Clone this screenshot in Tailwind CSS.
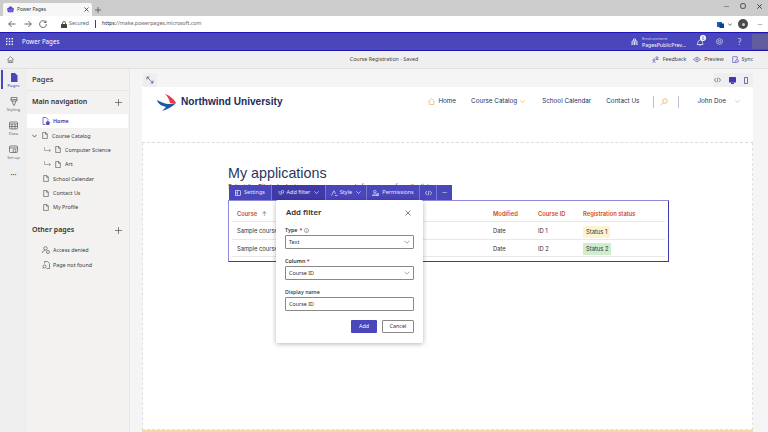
<!DOCTYPE html>
<html lang="en">
  <head>
    <meta charset="UTF-8" />
    <title>Power Pages</title>
    <script src="https://cdn.jsdelivr.net/npm/@tailwindcss/browser@4"></script>
  </head>
  <body class="w-[768px] h-[432px] overflow-hidden flex flex-col bg-white font-['Noto_Sans',sans-serif] text-[5.400px] text-[#323130]">
    <!-- browser tab strip -->
    <div class="h-[16px] bg-[#cccccc] flex items-end pl-[3px] shrink-0">
      <div class="w-[89px] h-[13px] bg-[#f7f7f7] rounded-t-[2px] flex items-center pl-[4px] pr-[3px] gap-[3px]">
        <svg width="7" height="7" viewBox="0 0 8 8"><path d="M4 0l4 3-1 4H1L0 3z" fill="#5b4fc4"/><path d="M0 3l4 1 4-1-4 4z" fill="#8a5fd8"/></svg>
        <span class="text-[4.800px] text-[#333] flex-1">Power Pages</span>
        <svg width="5" height="5" viewBox="0 0 5 5" stroke="#333" stroke-width=".8"><path d="M.5.5l4 4M4.500.5l-4 4"/></svg>
      </div>
      <svg class="ml-[3px] mb-[3px]" width="6" height="6" viewBox="0 0 6 6" stroke="#444" stroke-width=".7"><path d="M3 0v6M0 3h6"/></svg>
      <div class="ml-auto flex items-center gap-[11px] pr-[6px] h-[12px] mb-[4px]">
        <svg width="5" height="5" viewBox="0 0 5 5" stroke="#777" stroke-width=".8"><path d="M0 2.500h5"/></svg>
        <svg width="6" height="6" viewBox="0 0 6 6" fill="none" stroke="#444" stroke-width=".9"><rect x=".7" y=".7" width="4.600" height="4.600" rx="1"/></svg>
        <svg width="5" height="5" viewBox="0 0 5 5" stroke="#333" stroke-width=".9"><path d="M.3.3l4.400 4.400M4.700.3L.3 4.700"/></svg>
      </div>
    </div>
    <!-- address bar -->
    <div class="h-[16px] bg-white flex items-center shrink-0 pl-[8px] pr-[6px]">
      <svg width="8" height="8" viewBox="0 0 8 8" fill="none" stroke="#444" stroke-width=".8"><path d="M7.500 4H.7M3.700 1L.7 4l3 3"/></svg>
      <svg class="ml-[8px]" width="8" height="8" viewBox="0 0 8 8" fill="none" stroke="#444" stroke-width=".8"><path d="M.5 4h6.800M4.300 1l3 3-3 3"/></svg>
      <svg class="ml-[7px]" width="8" height="8" viewBox="0 0 8 8" fill="none" stroke="#444" stroke-width=".8"><path d="M6.800 2.200A3.400 3.400 0 1 0 7.400 4M7 .6v1.900H5.100"/></svg>
      <svg class="ml-[14px]" width="6" height="7" viewBox="0 0 6 7"><rect y="3" width="6" height="4" rx=".5" fill="#444"/><path d="M1.500 3V2a1.500 1.500 0 0 1 3 0v1" fill="none" stroke="#444" stroke-width=".8"/></svg>
      <span class="ml-[2px] text-[5.300px] text-[#666]">Secured</span>
      <span class="ml-[6px] w-px h-[8px] bg-[#444]"></span>
      <span class="ml-[6px] text-[5.200px] text-[#666]"><span class="text-[#222]">https</span>://make.powerpages.microsoft.com</span>
      <div class="ml-auto flex items-center">
        <svg width="7" height="7" viewBox="0 0 7 7"><rect width="5" height="5" y="1" fill="#1a5fb4"/><rect x="2.500" width="4.500" height="4.500" y="2.500" fill="#0b3f8f"/></svg>
        <svg class="ml-[4px]" width="4" height="3" viewBox="0 0 4 3" fill="none" stroke="#333" stroke-width=".7"><path d="M.3.5L2 2.400 3.700.5"/></svg>
        <span class="ml-[6px] w-[10px] h-[10px] rounded-full bg-[#4a4a4a] flex items-center justify-center"><span class="w-[3px] h-[3px] rounded-full bg-[#ccc]"></span></span>
        <span class="ml-[9px] text-[7px] leading-none text-[#777] tracking-tighter">···</span>
      </div>
    </div>
    <!-- power pages bar -->
    <div class="h-[19px] bg-[#4a46bb] border-y border-[#1f14b4] flex items-center shrink-0 text-white">
      <svg class="ml-[6px]" width="7" height="7" viewBox="0 0 7 7" fill="#fff"><rect width="1.400" height="1.400"/><rect x="2.800" width="1.400" height="1.400"/><rect x="5.600" width="1.400" height="1.400"/><rect y="2.800" width="1.400" height="1.400"/><rect x="2.800" y="2.800" width="1.400" height="1.400"/><rect x="5.600" y="2.800" width="1.400" height="1.400"/><rect y="5.600" width="1.400" height="1.400"/><rect x="2.800" y="5.600" width="1.400" height="1.400"/><rect x="5.600" y="5.600" width="1.400" height="1.400"/></svg>
      <span class="ml-[9px] text-[6.200px]">Power Pages</span>
      <svg class="ml-auto" width="7" height="7" viewBox="0 0 7 7" fill="none" stroke="#fff" stroke-width=".7"><path d="M1 7V3h5v4M.3 7h6.400M2.500 3V1h2v2M1 5h5M3.500 3v4"/></svg>
      <div class="ml-[4px] w-[44px] leading-[6px]">
        <div class="text-[4.200px] text-[#d4d2f0]">Environment</div>
        <div class="text-[5.200px]">PagesPublicPrev...</div>
      </div>
      <div class="ml-[10px] relative w-[8px] h-[8px]">
        <svg width="8" height="8" viewBox="0 0 8 8" fill="none" stroke="#fff" stroke-width=".7"><path d="M1 6.500c1-1 .5-4 3-4.500s2.500 3 3 4.500zM3 7h2"/></svg>
        <span class="absolute -top-[3px] -right-[2px] w-[6px] h-[6px] rounded-full bg-white text-[#4a46bb] text-[4.500px] leading-[6px] text-center">6</span>
      </div>
      <svg class="ml-[12px]" width="7" height="7" viewBox="0 0 7 7" fill="none" stroke="#d9d8f3" stroke-width=".7"><circle cx="3.500" cy="3.500" r="1.200"/><path d="M3.500.4l2.700 1.500v3.200L3.500 6.600.8 5.100V1.900z"/></svg>
      <span class="ml-[13px] w-[7px] text-center text-[8px] leading-none text-[#d9d8f3]">?</span>
      <span class="ml-[9px] w-[16px] h-[15px] bg-[#625d9f]"></span>
    </div>
    <!-- command bar -->
    <div class="h-[18px] bg-[#efefef] border-b border-[#e0e0e0] grid grid-cols-[1fr_auto_1fr] items-center shrink-0">
      <svg class="ml-[7px]" width="7" height="7" viewBox="0 0 7 7" fill="none" stroke="#555" stroke-width=".6"><path d="M.5 3.500L3.500.6l3 2.900M1.200 3v3.500h4.600V3M2.700 6.500V4.500h1.600v2"/></svg>
      <span class="text-[5.300px] text-[#444]">Course Registration - Saved</span>
      <div class="flex items-center justify-end pr-[15px] text-[5.300px] text-[#444]">
        <svg width="7" height="7" viewBox="0 0 7 7" fill="none" stroke="#5a55c0" stroke-width=".7"><circle cx="5" cy="1.800" r="1.100"/><circle cx="2" cy="4" r="1.100"/><path d="M.5 6.500c.5-1 2.500-1 3 0M4 3.500h2.500"/></svg>
        <span class="ml-[4px]">Feedback</span>
        <svg class="ml-[7px]" width="8" height="7" viewBox="0 0 8 7" fill="none" stroke="#5a55c0" stroke-width=".7"><path d="M.5 3.500L4 1l3.500 2.500L4 6z"/><circle cx="4" cy="3.500" r=".8"/></svg>
        <span class="ml-[3px]">Preview</span>
        <svg class="ml-[8px]" width="7" height="7" viewBox="0 0 7 7" fill="none" stroke="#5a55c0" stroke-width=".7"><path d="M4 6.500H.7V.7h4.500v2.500"/><circle cx="5" cy="5" r="1.400"/></svg>
        <span class="ml-[3px]">Sync</span>
      </div>
    </div>

    <div class="flex-1 flex min-h-0">
      <!-- left rail -->
      <div class="w-[27px] bg-[#efefef] shrink-0 pt-[1px] flex flex-col items-center text-[4.200px] text-[#666]">
        <div class="relative w-full h-[24px] flex flex-col items-center pt-[3px] text-[#3f3ab0]">
          <span class="absolute left-[1px] top-0 w-[1.500px] h-[19px] bg-[#4a46bb]"></span>
          <svg width="8" height="9" viewBox="0 0 8 9" fill="#4a46bb"><path d="M1 0h4l2.500 2.500V9H1z"/></svg>
          <span class="mt-[1px]">Pages</span>
        </div>
        <div class="w-full h-[24px] flex flex-col items-center pt-[3px]">
          <svg width="8" height="9" viewBox="0 0 8 9" fill="none" stroke="#555" stroke-width=".7"><path d="M1 .5h6v3.500H1zM1 2.500h6M2.500 4L3 7l1 1.500L5 7l.5-3"/></svg>
          <span class="mt-[1px]">Styling</span>
        </div>
        <div class="w-full h-[24px] flex flex-col items-center pt-[3px]">
          <svg width="9" height="9" viewBox="0 0 9 9" fill="none" stroke="#555" stroke-width=".7"><rect x=".5" y="1" width="8" height="7" rx="1"/><path d="M.5 3h8M3 3v5M6 3v5M.5 5.500h8"/></svg>
          <span class="mt-[1px]">Data</span>
        </div>
        <div class="w-full h-[24px] flex flex-col items-center pt-[3px]">
          <svg width="9" height="9" viewBox="0 0 9 9" fill="none" stroke="#555" stroke-width=".7"><rect x=".5" y="1" width="8" height="6.500" rx="1"/><path d="M.5 3h8"/><circle cx="5.500" cy="5.800" r="1.500" fill="#efefef"/></svg>
          <span class="mt-[1px]">Set up</span>
        </div>
        <div class="mt-[5px] text-[7px] leading-none font-bold text-[#444]">···</div>
      </div>

      <!-- pages panel -->
      <div class="w-[103px] bg-[#f3f2f1] shrink-0 border-r border-[#e8e8e8] text-[#3b3a39]">
        <div class="h-[22px] border-b border-[#e6e6e6] pl-[5px] flex items-center text-[7.500px] font-medium text-[#333]">Pages</div>
        <div class="h-[23px] flex items-center justify-between pl-[5px] pr-[7px] text-[7px] font-semibold text-[#323130]">
          <span>Main navigation</span>
          <svg width="7" height="7" viewBox="0 0 7 7" stroke="#555" stroke-width=".7"><path d="M3.500 0v7M0 3.500h7"/></svg>
        </div>
        <div class="h-[14.400px] bg-white flex items-center pl-[15px] font-semibold text-[#3a34b0] mr-px">
          <svg width="8" height="8" viewBox="0 0 8 8" fill="none" stroke="#3f3ab8" stroke-width=".7"><path d="M3.500 7.500h-2.500V.5h3l2 2v1"/><path d="M3.800 5.800l2-1.800 2 1.800M4.500 5.500v2h2.600v-2" fill="#3f3ab8"/></svg>
          <span class="ml-[3px]">Home</span>
        </div>
        <div class="h-[14.400px] flex items-center pl-[5px]">
          <svg width="5" height="4" viewBox="0 0 5 4" fill="none" stroke="#333" stroke-width=".7"><path d="M.3.7l2.200 2.400L4.700.7"/></svg>
          <svg class="ml-[5px]" width="6" height="7" viewBox="0 0 6 7" fill="none" stroke="#444" stroke-width=".6"><path d="M.7.4h3l1.600 1.600v4.600H.7zM3.500.4V2.200h1.800"/></svg>
          <span class="ml-[4px]">Course Catalog</span>
        </div>
        <div class="h-[14.400px] flex items-center pl-[17px]">
          <svg width="7" height="6" viewBox="0 0 7 6" fill="none" stroke="#666" stroke-width=".5"><path d="M.5 0v3.500h6M5 2l1.500 1.500L5 5"/></svg>
          <svg class="ml-[4px]" width="6" height="7" viewBox="0 0 6 7" fill="none" stroke="#444" stroke-width=".6"><path d="M.7.4h3l1.600 1.600v4.600H.7zM3.500.4V2.200h1.800"/></svg>
          <span class="ml-[4px]">Computer Science</span>
        </div>
        <div class="h-[14.400px] flex items-center pl-[17px]">
          <svg width="7" height="6" viewBox="0 0 7 6" fill="none" stroke="#666" stroke-width=".5"><path d="M.5 0v3.500h6M5 2l1.500 1.500L5 5"/></svg>
          <svg class="ml-[4px]" width="6" height="7" viewBox="0 0 6 7" fill="none" stroke="#444" stroke-width=".6"><path d="M.7.4h3l1.600 1.600v4.600H.7zM3.500.4V2.200h1.800"/></svg>
          <span class="ml-[4px]">Art</span>
        </div>
        <div class="h-[14.400px] flex items-center pl-[16px]">
          <svg width="6" height="7" viewBox="0 0 6 7" fill="none" stroke="#444" stroke-width=".6"><path d="M.7.4h3l1.600 1.600v4.600H.7zM3.500.4V2.200h1.800"/></svg>
          <span class="ml-[4px]">School Calendar</span>
        </div>
        <div class="h-[14.400px] flex items-center pl-[16px]">
          <svg width="6" height="7" viewBox="0 0 6 7" fill="none" stroke="#444" stroke-width=".6"><path d="M.7.4h3l1.600 1.600v4.600H.7zM3.500.4V2.200h1.800"/></svg>
          <span class="ml-[4px]">Contact Us</span>
        </div>
        <div class="h-[14.400px] flex items-center pl-[16px]">
          <svg width="6" height="7" viewBox="0 0 6 7" fill="none" stroke="#444" stroke-width=".6"><path d="M.7.4h3l1.600 1.600v4.600H.7zM3.500.4V2.200h1.800"/></svg>
          <span class="ml-[4px]">My Profile</span>
        </div>
        <div class="h-[25px] mt-[3.500px] flex items-center justify-between pl-[5px] pr-[7px] text-[7px] font-semibold text-[#323130]">
          <span>Other pages</span>
          <svg width="7" height="7" viewBox="0 0 7 7" stroke="#555" stroke-width=".7"><path d="M3.500 0v7M0 3.500h7"/></svg>
        </div>
        <div class="h-[14.400px] flex items-center pl-[15px]">
          <svg width="8" height="8" viewBox="0 0 8 8" fill="none" stroke="#444" stroke-width=".6"><circle cx="3.500" cy="2.300" r="1.700"/><path d="M.5 7c0-2 1.500-2.800 3-2.800"/><circle cx="6" cy="6" r="1.500"/></svg>
          <span class="ml-[3px]">Access denied</span>
        </div>
        <div class="h-[14.400px] flex items-center pl-[15px]">
          <svg width="8" height="8" viewBox="0 0 8 8" fill="none" stroke="#444" stroke-width=".6"><path d="M2.500 2.500V.5h3l2 2v5h-3"/><circle cx="2.500" cy="5.500" r="1.500"/><path d="M1.500 6.500l-1 1"/></svg>
          <span class="ml-[3px]">Page not found</span>
        </div>
      </div>

      <!-- canvas -->
      <div class="flex-1 min-w-0 bg-[#f5f5f5] bg-[radial-gradient(#d2d2d2_0.5px,transparent_0.6px)] bg-[size:8px_8px] pl-[12px] pr-[15px] pt-[4px] flex flex-col">
        <div class="h-[14px] flex justify-between shrink-0">
          <div class="ml-px w-[14px] bg-[#eeeeee] flex items-center justify-center">
            <svg width="8" height="8" viewBox="0 0 8 8" fill="none" stroke="#4a4a7a" stroke-width=".7"><path d="M1 3.500V1h2.500M1 1l6 6M7 4.500V7H4.500"/></svg>
          </div>
          <div class="w-[40px] bg-[#eeeeee] flex items-center justify-end gap-[8px] pr-[5px]">
            <svg width="7" height="6" viewBox="0 0 7 6" fill="none" stroke="#4a4a7a" stroke-width=".6"><path d="M2 1L.4 3 2 5M5 1l1.600 2L5 5M4 .6L3 5.400"/></svg>
            <svg width="7" height="7" viewBox="0 0 7 7" fill="#3f3ab0"><rect width="7" height="5.500" rx=".5"/><rect x="2" y="5.500" width="3" height="1.500"/></svg>
            <svg width="4" height="7" viewBox="0 0 4 7" fill="none" stroke="#3f3ab0" stroke-width=".8"><rect x=".4" y=".4" width="3.200" height="6.200" rx=".4"/></svg>
          </div>
        </div>
        <div class="flex-1 bg-white flex flex-col min-h-0">
          <!-- site header -->
          <div class="h-[56px] shrink-0 border-b border-dashed border-[#dcdcdc] flex items-start pt-[7px] pl-[15px] pr-[13px] text-[6.300px] text-[#20315f] font-['Inter',sans-serif]">
            <svg width="19" height="17" viewBox="0 0 19 17">
              <path d="M0 6C4 8 8 10 12 10L19 9C15 13 11 15 5 17L9 13C5 12 1 10 0 6Z" fill="#1d5a9e"/>
              <path d="M8 0C12 1 17 5 19 9L13 9C12 5 11 3 8 0Z" fill="#e8394a"/>
            </svg>
            <span class="ml-[5px] h-[15px] flex items-center font-['Liberation_Sans',sans-serif] font-bold text-[10.100px] text-[#1c2c5e]">Northwind University</span>
            <div class="ml-auto h-[15px] flex items-center">
              <svg width="7" height="7" viewBox="0 0 7 7" fill="none" stroke="#f2b04a" stroke-width=".7"><path d="M.4 3.500L3.500.6l3.100 2.900M1.200 3v3.500h4.600V3"/></svg>
              <span class="ml-[3px]">Home</span>
              <span class="ml-[15px]">Course Catalog</span>
              <svg class="ml-[3px]" width="5" height="3" viewBox="0 0 5 3" fill="none" stroke="#f2b04a" stroke-width=".7"><path d="M.3.4L2.500 2.500 4.700.4"/></svg>
              <span class="ml-[17px]">School Calendar</span>
              <span class="ml-[15px]">Contact Us</span>
              <span class="ml-[14px] w-px h-[12px] bg-[#b9c2d2]"></span>
              <svg class="ml-[6px]" width="8" height="8" viewBox="0 0 8 8" fill="none" stroke="#f2b04a" stroke-width=".8"><circle cx="5" cy="3" r="2.300"/><path d="M3.300 4.700L.6 7.400"/></svg>
              <span class="ml-[10px] w-px h-[12px] bg-[#b9c2d2]"></span>
              <span class="ml-[18px]">John Doe</span>
              <svg class="ml-[9px]" width="5" height="3" viewBox="0 0 5 3" fill="none" stroke="#f2b04a" stroke-width=".7"><path d="M.3.4L2.500 2.500 4.700.4"/></svg>
            </div>
          </div>
          <!-- page section -->
          <div class="flex-1 relative border-x border-b border-dashed border-[#e0e0e0] pl-[85px] pt-[21px] min-h-0">
            <h1 class="font-['Liberation_Sans',sans-serif] text-[14.300px] leading-[18px] text-[#1f3864]">My applications</h1>
            <p class="mt-[1px] h-[8px] text-[6px] leading-[8px] text-[#333] font-['Inter',sans-serif]">Select the Tile to look at your courses or apply for courses from the list</p>
            <!-- list -->
            <div class="mt-[9px] w-[441px] h-[62px] border border-[#8f8bdb] border-b-[#3d38ae] border-r-[#3d38ae] rounded-[1px] px-[3px] pt-[4px] font-['Inter',sans-serif] text-[5.800px] text-[#333]">
              <div class="h-[17px] border-b border-[#e8e8e8] pl-[5px] pt-[2px] flex items-center font-semibold text-[#cf4a1c]">
                <span class="w-[256px]">Course <span class="ml-[3px] text-[#888]">↑</span></span>
                <span class="w-[45px]">Modified</span>
                <span class="w-[45px]">Course ID</span>
                <span>Registration status</span>
              </div>
              <div class="h-[18px] border-b border-[#e8e8e8] pl-[5px] pt-[2px] flex items-center">
                <span class="w-[256px]">Sample course</span>
                <span class="w-[45px]">Date</span>
                <span class="w-[45px]">ID 1</span>
                <span class="px-[3px] h-[12px] leading-[12px] bg-[#fdf3d0]">Status 1</span>
              </div>
              <div class="h-[17px] border-b border-[#e8e8e8] pl-[5px] pt-[2px] flex items-center">
                <span class="w-[256px]">Sample course</span>
                <span class="w-[45px]">Date</span>
                <span class="w-[45px]">ID 2</span>
                <span class="px-[3px] h-[12px] leading-[12px] bg-[#cfeccd]">Status 2</span>
              </div>
            </div>
            <!-- component toolbar -->
            <div class="absolute left-[86px] top-[42px] h-[15px] flex gap-px bg-[#7a76cf] text-[5.500px] text-[#e6e5f8] rounded-[1px]">
              <div class="w-[42px] bg-[#4a46bb] flex items-center justify-center gap-[3px]">
                <svg width="6" height="6" viewBox="0 0 6 6" fill="none" stroke="#fff" stroke-width=".6"><rect x=".4" y=".7" width="5.200" height="4.600"/><path d="M2.400.7v4.600M.4 3h2"/></svg>
                Settings
              </div>
              <div class="w-[53px] bg-[#3f3aa8] flex items-center justify-center gap-[2px]">
                <svg width="7" height="6" viewBox="0 0 7 6" fill="none" stroke="#fff" stroke-width=".6"><circle cx="4.500" cy="1.800" r="1.300"/><path d="M0 2h2.500M1 4h3"/></svg>
                Add filter
                <svg class="ml-[2px]" width="5" height="3" viewBox="0 0 5 3" fill="none" stroke="#fff" stroke-width=".6"><path d="M.3.4L2.500 2.500 4.700.4"/></svg>
              </div>
              <div class="w-[40px] bg-[#4a46bb] flex items-center justify-center gap-[2px]">
                <svg width="7" height="6" viewBox="0 0 7 6" fill="none" stroke="#fff" stroke-width=".6"><path d="M.5 5.500L3 .8l1.500 3M4 5.500h2.500"/></svg>
                Style
                <svg class="ml-[2px]" width="5" height="3" viewBox="0 0 5 3" fill="none" stroke="#fff" stroke-width=".6"><path d="M.3.4L2.500 2.500 4.700.4"/></svg>
              </div>
              <div class="w-[52px] bg-[#4a46bb] flex items-center justify-center gap-[3px]">
                <svg width="7" height="6" viewBox="0 0 7 6" fill="none" stroke="#fff" stroke-width=".6"><circle cx="2.800" cy="1.700" r="1.300"/><path d="M.4 5.600c0-2 4.800-2 4.800 0zM5 3.500h1.600v2H5z"/></svg>
                Permissions
              </div>
              <div class="w-[16px] bg-[#4a46bb] flex items-center justify-center">
                <svg width="7" height="6" viewBox="0 0 7 6" fill="none" stroke="#fff" stroke-width=".6"><path d="M2 1L.4 3 2 5M5 1l1.600 2L5 5M4 .6L3 5.400"/></svg>
              </div>
              <div class="w-[15px] bg-[#4a46bb] flex items-center justify-center font-bold text-white">···</div>
            </div>
            <!-- add filter dialog -->
            <div class="absolute left-[133px] top-[57px] w-[147px] h-[143px] bg-white rounded-[2px] shadow-[0_1px_5px_rgba(0,0,0,0.3)] px-[9px] pt-[5px] text-[#323130] text-[5.400px] font-['Noto_Sans',sans-serif]">
              <div class="h-[15px] pl-px flex items-center justify-between">
                <span class="text-[7.800px] font-semibold">Add filter</span>
                <svg class="mr-[3px]" width="6" height="6" viewBox="0 0 6 6" stroke="#555" stroke-width=".7"><path d="M.5.5l5 5M5.500.5l-5 5"/></svg>
              </div>
              <div class="mt-[6px] h-[8px] leading-[8px] font-semibold flex items-center gap-[2px]">Type <span class="text-[#c4262e]">*</span>
                <svg width="5" height="5" viewBox="0 0 5 5" fill="none" stroke="#555" stroke-width=".5"><circle cx="2.500" cy="2.500" r="2.100"/><path d="M2.500 2v1.600"/></svg>
              </div>
              <div class="mt-[1px] h-[14px] border border-[#8a8886] rounded-[1px] px-[3px] flex items-center justify-between">Text
                <svg width="6" height="4" viewBox="0 0 6 4" fill="none" stroke="#666" stroke-width=".6"><path d="M.5.7L3 3.200 5.500.7"/></svg>
              </div>
              <div class="mt-[8px] h-[8px] leading-[8px] font-semibold">Column <span class="text-[#c4262e]">*</span></div>
              <div class="mt-[1px] h-[14px] border border-[#8a8886] rounded-[1px] px-[3px] flex items-center justify-between">Course ID
                <svg width="6" height="4" viewBox="0 0 6 4" fill="none" stroke="#666" stroke-width=".6"><path d="M.5.7L3 3.200 5.500.7"/></svg>
              </div>
              <div class="mt-[8px] h-[8px] leading-[8px] font-medium">Display name</div>
              <div class="mt-[1px] h-[14px] border border-[#8a8886] rounded-[1px] px-[3px] flex items-center">Course ID</div>
              <div class="mt-[9px] flex justify-end gap-[5px]">
                <span class="w-[26px] h-[13px] bg-[#4a46bb] text-white rounded-[1px] flex items-center justify-center">Add</span>
                <span class="w-[32px] h-[13px] border border-[#8a8886] rounded-[1px] flex items-center justify-center">Cancel</span>
              </div>
            </div>
          </div>
          <div class="h-[2px] shrink-0 bg-[#f3d9a6]"></div>
        </div>
      </div>
    </div>
  </body>
</html>
